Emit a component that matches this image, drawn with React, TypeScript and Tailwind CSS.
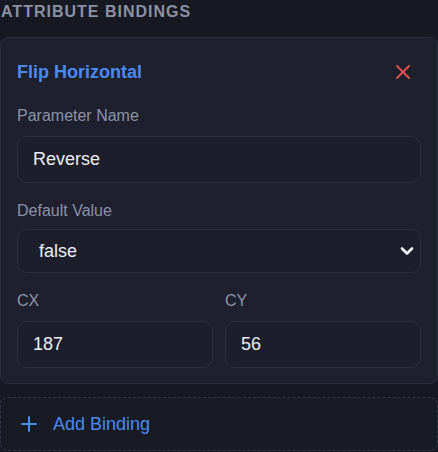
import { X, Plus, ChevronDown } from "lucide-react";

function Field({ label, value }: { label: string; value: string }) {
  return (
    <div className="flex flex-col">
      <label className="mb-2 text-[16px] leading-6 text-[#8b93a9]">{label}</label>
      <div className="flex h-[47px] items-center rounded-[10px] border border-[#2c2f41] bg-[#1c1e2b] px-[15px] text-[18px] text-[#eceef4]">
        {value}
      </div>
    </div>
  );
}

export default function App() {
  return (
    <div className="h-[452px] w-[438px] overflow-hidden bg-[#171922] font-['Liberation_Sans',Arial,sans-serif]">
      <div className="pl-[1px] text-[16px] font-bold uppercase leading-6 tracking-[1px] text-[#8a91a3]">
        Attribute Bindings
      </div>

      <div className="mt-[13px] rounded-lg border border-[#2a2d3e] bg-[#1e202d] px-4 pb-[15px] pt-4">
        <div className="mb-[14px] flex h-9 items-center justify-between">
          <span className="text-[18px] font-bold leading-7 text-[#4a8af5]">Flip Horizontal</span>
          <button className="p-1.5 text-[#e5534b]">
            <X size={24} strokeWidth={1.8} />
          </button>
        </div>

        <Field label="Parameter Name" value="Reverse" />

        <div className="mt-4 flex flex-col">
          <label className="mb-1.5 text-[16px] leading-6 text-[#8b93a9]">Default Value</label>
          <div className="flex h-[44px] items-center justify-between rounded-[10px] border border-[#2c2f41] bg-[#1c1e2b] pl-[21px] pr-[3px] text-[18px] text-[#eceef4]">
            <span>false</span>
            <ChevronDown size={20} strokeWidth={3.2} className="text-[#eef0f5]" />
          </div>
        </div>

        <div className="mt-4 grid grid-cols-2 gap-3">
          <Field label="CX" value="187" />
          <Field label="CY" value="56" />
        </div>
      </div>

      <div className="mt-[13px] flex items-center gap-3 rounded-lg border border-dashed border-[#34374a] bg-[#181a24] px-4 py-3 text-[18px] leading-7 text-[#4a8af5]">
        <Plus size={24} strokeWidth={2} />
        <span>Add Binding</span>
      </div>
    </div>
  );
}
